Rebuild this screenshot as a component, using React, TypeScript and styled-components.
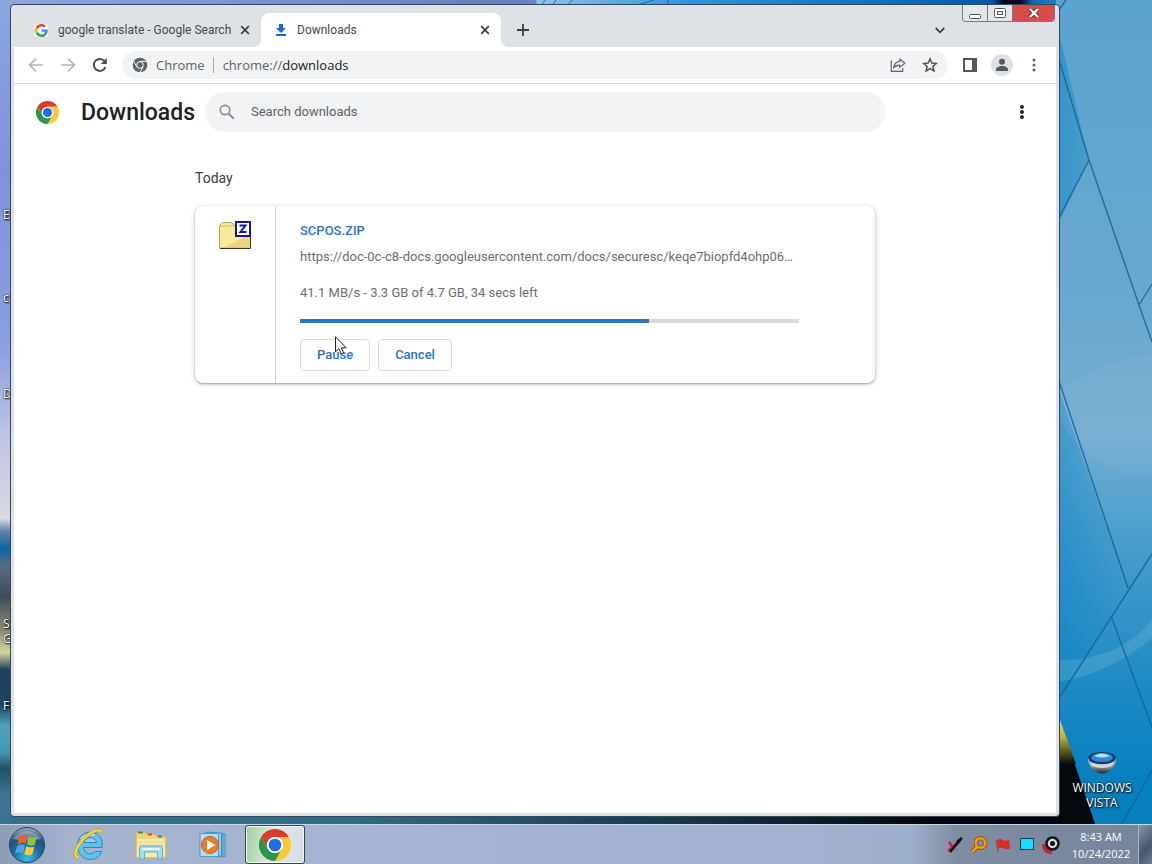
import React from "react";
import styled, { createGlobalStyle, css } from "styled-components";

const UI = `"Open Sans", "Noto Sans", sans-serif`;
const PAGE = `Roboto, "Liberation Sans", sans-serif`;

const GlobalStyle = createGlobalStyle`
  *, *::before, *::after { box-sizing: border-box; }
  body { margin: 0; font-family: ${PAGE}; }
  button, input { font: inherit; color: inherit; }
  svg { display: block; flex: none; }
`;

/* ---------- Desktop ---------- */

const Desktop = styled.div`
  position: relative;
  display: flex;
  flex-direction: column;
  min-height: 100vh;
  overflow: hidden;
  background: #1b3a50;
`;

const WallpaperSvg = styled.svg`
  position: absolute;
  inset: 0;
  width: 100%;
  height: 100%;
`;

const Shortcut = styled.a<{ $top?: number; $bottom?: number; $side: "left" | "right" }>`
  position: absolute;
  ${(p) => (p.$top !== undefined ? `top: ${p.$top}px;` : `bottom: ${p.$bottom}px;`)}
  ${(p) => (p.$side === "left" ? "left: 3px; width: 20px;" : "right: 8px; width: 84px; align-items: center;")}
  display: flex;
  flex-direction: column;
  gap: 4px;
  overflow: hidden;
  color: #fff;
  font: 12px/15px ${UI};
  text-align: ${(p) => (p.$side === "left" ? "left" : "center")};
  text-decoration: none;
  text-shadow: 1px 1px 2px #000, 0 0 2px #000;
`;

/* ---------- Window ---------- */

const Window = styled.main`
  position: relative;
  flex: 1;
  display: flex;
  flex-direction: column;
  margin: 4px 92px 7px 10px;
  padding: 0 3px 3px 3px;
  border: 1px solid #34485c;
  border-radius: 4px;
  background: #dee1e6;
  overflow: hidden;
`;

const TabStrip = styled.header`
  display: flex;
  height: 42px;
  padding-left: 7px;
`;

const Tab = styled.div<{ $active?: boolean }>`
  position: relative;
  display: flex;
  align-items: center;
  flex: 0 1 240px;
  height: 34px;
  margin-top: 8px;
  padding: 0 11px 0 14px;
  color: #45494d;
  font: 12px/16px ${PAGE};
  ${(p) =>
    p.$active &&
    css`
      background: #fff;
      border-radius: 8px 8px 0 0;
      &::before,
      &::after {
        content: "";
        position: absolute;
        bottom: 0;
        width: 8px;
        height: 8px;
      }
      &::before {
        left: -8px;
        background: radial-gradient(circle at 0 0, transparent 8px, #fff 8px);
      }
      &::after {
        right: -8px;
        background: radial-gradient(circle at 100% 0, transparent 8px, #fff 8px);
      }
    `}
`;

const TabLink = styled.a`
  display: flex;
  align-items: center;
  gap: 10px;
  flex: 1;
  min-width: 0;
  color: inherit;
  text-decoration: none;
  white-space: nowrap;
`;

const IconButton = styled.button<{ $size?: number }>`
  display: flex;
  align-items: center;
  justify-content: center;
  flex: none;
  width: ${(p) => p.$size ?? 32}px;
  height: ${(p) => p.$size ?? 32}px;
  padding: 0;
  border: 0;
  border-radius: 50%;
  background: none;
  color: #5f6368;
`;

const StripButtons = styled.div<{ $end?: boolean }>`
  display: flex;
  align-items: center;
  padding-top: 8px;
  ${(p) => (p.$end ? "margin-left: auto; padding-right: 6px;" : "padding-left: 6px;")}
  button { color: #3c4043; }
`;

const Caption = styled.div`
  display: flex;
  align-self: flex-start;
  margin-right: 1px;
  border: 1px solid #777c82;
  border-top: 0;
  border-radius: 0 0 4px 4px;
  overflow: hidden;
`;

const CaptionButton = styled.button<{ $close?: boolean }>`
  display: flex;
  align-items: center;
  justify-content: center;
  width: ${(p) => (p.$close ? 41 : 25)}px;
  height: 16px;
  padding: 0;
  border: 0;
  border-right: ${(p) => (p.$close ? "0" : "1px solid #777c82")};
  background: ${(p) => (p.$close ? "#d94b4b" : "#e3e6ea")};
`;

const Toolbar = styled.nav`
  display: flex;
  align-items: center;
  height: 37px;
  padding: 0 6px;
  border-bottom: 1px solid #dadce0;
  background: #fff;
`;

const Omnibox = styled.div`
  display: flex;
  align-items: center;
  flex: 1;
  height: 28px;
  margin: 0 6px;
  padding: 0 2px 0 10px;
  border-radius: 14px;
  background: #f1f3f4;
  color: #5f6368;
  font: 13px/20px ${UI};
`;

const SiteName = styled.span`
  margin-left: 8px;
  padding-right: 8px;
  border-right: 1px solid #a5a9ad;
  line-height: 16px;
`;

const Scheme = styled.label`
  margin-left: 9px;
`;

const Address = styled.input`
  flex: 1;
  min-width: 0;
  padding: 0;
  border: 0;
  outline: 0;
  background: none;
  color: #202124;
`;

const Avatar = styled.span`
  display: flex;
  align-items: center;
  justify-content: center;
  width: 22px;
  height: 22px;
  border-radius: 50%;
  background: #dee1e6;
`;

/* ---------- Downloads page ---------- */

const Page = styled.section`
  flex: 1;
  background: #fff;
`;

const PageHeader = styled.div`
  display: flex;
  align-items: center;
  height: 56px;
  padding: 0 18px 0 22px;
`;

const Title = styled.h1`
  width: 112px;
  margin: 2px 12px 0 22px;
  color: #202124;
  font-size: 23px;
  font-weight: 500;
  line-height: 32px;
  white-space: nowrap;
`;

const Search = styled.label`
  display: flex;
  align-items: center;
  flex: 0 1 680px;
  gap: 14px;
  height: 40px;
  padding: 0 12px;
  border-radius: 20px;
  background: #f1f3f4;
`;

const SearchInput = styled.input`
  flex: 1;
  min-width: 0;
  padding: 0;
  border: 0;
  outline: 0;
  background: none;
  font-size: 13px;
  line-height: 20px;
  &::placeholder { color: #5f6368; opacity: 1; }
`;

const MenuSlot = styled.div`
  margin-left: auto;
  button { color: #202124; }
`;

const List = styled.div`
  max-width: 680px;
  margin: 0 auto;
  padding-top: 28px;
`;

const DateHeading = styled.h2`
  margin: 0 0 18px;
  color: #3c4043;
  font-size: 14px;
  font-weight: 400;
  line-height: 20px;
`;

const Card = styled.article`
  display: flex;
  border-radius: 8px;
  background: #fff;
  box-shadow: 0 1px 2px rgba(60, 64, 67, 0.4), 0 1px 4px 1px rgba(60, 64, 67, 0.16);
`;

const FileIconColumn = styled.div`
  width: 81px;
  padding: 14px 24px;
  border-right: 1px solid #d0d3d7;
`;

const Details = styled.div`
  flex: 1;
  min-width: 0;
  padding: 16px 76px 12px 24px;
  color: #6a6e73;
  font-size: 13px;
  line-height: 18px;
`;

const FileName = styled.a`
  display: block;
  color: #2b71d0;
  font-weight: 500;
  text-decoration: none;
`;

const Line = styled.p<{ $gap: number }>`
  margin: ${(p) => p.$gap}px 0 0;
  white-space: nowrap;
`;

const Progress = styled.progress`
  appearance: none;
  display: block;
  width: 100%;
  height: 4px;
  margin: 17px 0 16px;
  border: 0;
  background: #dadada;
  &::-webkit-progress-bar { background: #dadada; }
  &::-webkit-progress-value { background: #2f76bd; }
  &::-moz-progress-bar { background: #2f76bd; }
`;

const Actions = styled.div`
  display: flex;
  gap: 8px;
`;

const ActionButton = styled.button`
  height: 32px;
  padding: 0 16px;
  border: 1px solid #dadce0;
  border-radius: 4px;
  background: #fff;
  color: #2b71d0;
  font-weight: 500;
`;

const Pointer = styled.svg`
  position: absolute;
  left: 335px;
  top: 336px;
`;

/* ---------- Taskbar ---------- */

const Taskbar = styled.footer`
  position: relative;
  display: flex;
  align-items: center;
  height: 40px;
  border-top: 1px solid #c8d6e6;
  background: linear-gradient(90deg, #8c9db8 0, #a5b3cd 70px, #a4b4d2 320px, #a2b2d0 70%, #9fb0ca 79%, #7f8da4 83%, #76859c 100%);
`;

const StartButton = styled.button`
  display: flex;
  justify-content: center;
  width: 54px;
  margin-right: 5px;
  padding: 0;
  border: 0;
  background: none;
`;

const TaskButton = styled.button<{ $active?: boolean }>`
  display: flex;
  align-items: center;
  justify-content: center;
  width: 60px;
  height: 39px;
  margin-right: 2px;
  padding: 0;
  border: ${(p) => (p.$active ? "1px solid #37424f" : "0")};
  border-radius: 3px;
  background: ${(p) => (p.$active ? "linear-gradient(100deg, #9fd09a, #dfe9e4 45%, #d5dce8)" : "none")};
  box-shadow: ${(p) => (p.$active ? "inset 0 0 0 1px #f4f8fa" : "none")};
`;

const Tray = styled.div`
  display: flex;
  align-items: center;
  gap: 4px;
  height: 100%;
  margin-left: auto;
`;

const TrayButton = styled.button`
  display: flex;
  align-items: center;
  justify-content: center;
  width: 20px;
  height: 24px;
  padding: 0;
  border: 0;
  background: none;
`;

const Clock = styled.time`
  width: 66px;
  margin-left: 3px;
  color: #fff;
  font: 11px/17px ${UI};
  text-align: center;
`;

const ShowDesktop = styled.button`
  width: 14px;
  height: 100%;
  padding: 0;
  border: 1px solid #a9b7c8;
  border-width: 0 0 0 1px;
  background: linear-gradient(135deg, #8595ab, #46566d 60%, #6b7b91);
`;

/* ---------- Drawings ---------- */

const Wallpaper = () => (
  <WallpaperSvg viewBox="0 0 1152 864" preserveAspectRatio="none" aria-hidden="true">
    <defs>
      <linearGradient id="sky" x1="0" y1="0" x2="0" y2="1">
        <stop offset="0" stopColor="#8aa7df" />
        <stop offset=".2" stopColor="#7d93db" />
        <stop offset=".4" stopColor="#8c9ee0" />
        <stop offset=".5" stopColor="#bcc2e2" />
        <stop offset=".6" stopColor="#dcd9e2" />
        <stop offset=".615" stopColor="#5c83ac" />
        <stop offset=".635" stopColor="#0f64a5" />
        <stop offset=".655" stopColor="#5a6c84" />
        <stop offset=".69" stopColor="#404a58" />
        <stop offset=".73" stopColor="#8e8d70" />
        <stop offset=".755" stopColor="#d5d6a0" />
        <stop offset=".775" stopColor="#20415a" />
        <stop offset=".815" stopColor="#1c4560" />
        <stop offset=".84" stopColor="#4ea3b8" />
        <stop offset=".87" stopColor="#4796b0" />
        <stop offset=".89" stopColor="#215068" />
        <stop offset=".92" stopColor="#3b7694" />
        <stop offset="1" stopColor="#37708f" />
      </linearGradient>
      <linearGradient id="glass" x1="0" y1="0" x2="0" y2="1">
        <stop offset="0" stopColor="#5ba4cf" />
        <stop offset=".3" stopColor="#66a7ce" />
        <stop offset=".5" stopColor="#74aed2" />
        <stop offset=".62" stopColor="#4a9ecd" />
        <stop offset=".8" stopColor="#1c89c4" />
        <stop offset=".9" stopColor="#0780c0" />
        <stop offset="1" stopColor="#0a7cba" />
      </linearGradient>
      <linearGradient id="glassLeft" x1="0" y1="0" x2="1" y2="0">
        <stop offset="0" stopColor="#0a82c4" stopOpacity=".5" />
        <stop offset="1" stopColor="#0a82c4" stopOpacity="0" />
      </linearGradient>
      <linearGradient id="topEdge" x1="0" y1="0" x2="1" y2="0">
        <stop offset="0" stopColor="#8aa7df" />
        <stop offset=".44" stopColor="#6a7cc4" />
        <stop offset=".46" stopColor="#6a86c6" />
        <stop offset=".462" stopColor="#8fc2e6" />
        <stop offset=".6" stopColor="#2d94da" />
        <stop offset=".78" stopColor="#0b6cc0" />
        <stop offset=".86" stopColor="#0a55aa" />
        <stop offset=".87" stopColor="#02061c" />
        <stop offset=".885" stopColor="#02061c" />
        <stop offset=".895" stopColor="#0f66b4" />
        <stop offset=".95" stopColor="#4aa2d2" />
        <stop offset="1" stopColor="#5ba4cf" />
      </linearGradient>
      <linearGradient id="bottomEdge" x1="0" y1="0" x2="1" y2="0">
        <stop offset="0" stopColor="#37708f" />
        <stop offset=".3" stopColor="#336a88" />
        <stop offset=".6" stopColor="#173546" />
        <stop offset=".8" stopColor="#04080c" />
        <stop offset="1" stopColor="#04080c" />
      </linearGradient>
      <linearGradient id="glow" x1="0" y1="0" x2="0" y2="1">
        <stop offset="0" stopColor="#ece9c0" />
        <stop offset=".5" stopColor="#c2b53a" />
        <stop offset="1" stopColor="#070b0c" />
      </linearGradient>
    </defs>
    <rect width="560" height="864" fill="url(#sky)" />
    <rect x="10" width="1142" height="10" fill="url(#topEdge)" />
    <rect x="10" y="810" width="1142" height="54" fill="url(#bottomEdge)" />
    <path d="M1056 0h96v864h-44l-52-155z" fill="url(#glass)" />
    <path d="M1056 20l33 140-29 60z M1056 382l72 206-68 109z" fill="url(#glassLeft)" />
    <path d="M1056 395q40-35 96-40v120q-50 10-96-60z" fill="#9dbfda" opacity=".14" />
    <path d="M1060 660q60 0 92-40v18q-40 34-92 44z" fill="#9fd0e2" opacity=".2" />
    <path d="M1056 709l39 115h-39z" fill="#05090b" />
    <path d="M1056 709l20 55h-20z" fill="url(#glow)" />
    <g fill="none" stroke="#10639b" strokeWidth="1.4" opacity=".85">
      <path d="M1058 56l31 104 50 145 13 37M1089 160l-30 58M1139 305l13-21M1058 378l70 210M1058 700l94-146M1111 616l41 111M1122 824l30-54M1066 0l-7 10" />
      <path d="M545 0l-4 6M556 0l-4 6M572 0l-5 6M634 6l20-6M668 0v6" strokeWidth="1" />
    </g>
  </WallpaperSvg>
);

const ChromeLogo = ({ size }: { size: number }) => (
  <svg width={size} height={size} viewBox="0 0 48 48" aria-hidden="true">
    <path d="M24 12H44.8A24 24 0 0 0 3.2 12L13.6 30A12 12 0 0 1 24 12z" fill="#db3a2f" />
    <path d="M34.4 30L24 48A24 24 0 0 0 44.8 12H24A12 12 0 0 1 34.4 30z" fill="#fcc934" />
    <path d="M13.6 30L3.2 12A24 24 0 0 0 24 48L34.4 30A12 12 0 0 1 13.6 30z" fill="#2b9548" />
    <circle cx="24" cy="24" r="12" fill="#fff" />
    <circle cx="24" cy="24" r="9.5" fill="#1f6fe0" />
  </svg>
);

const ChromeMono = () => (
  <svg width="16" height="16" viewBox="0 0 48 48" aria-hidden="true">
    <circle cx="24" cy="24" r="22" fill="#5f6368" />
    <path d="M24 13H46M14.5 29.5L3.5 10.4M33.5 29.5L23 48" stroke="#f1f3f4" strokeWidth="3" />
    <circle cx="24" cy="24" r="11" fill="#f1f3f4" />
    <circle cx="24" cy="24" r="8" fill="#5f6368" />
  </svg>
);

const GoogleG = () => (
  <svg width="13" height="13" viewBox="0 0 48 48" aria-hidden="true">
    <circle cx="24" cy="24" r="30" fill="#fff" />
    <path fill="#EA4335" d="M24 9.5c3.54 0 6.71 1.22 9.21 3.6l6.85-6.85C35.9 2.38 30.47 0 24 0 14.62 0 6.51 5.38 2.56 13.22l7.98 6.19C12.43 13.72 17.74 9.5 24 9.5z" />
    <path fill="#4285F4" d="M46.98 24.55c0-1.57-.15-3.09-.38-4.55H24v9.02h12.94c-.58 2.96-2.26 5.48-4.78 7.18l7.73 6c4.51-4.18 7.09-10.36 7.09-17.65z" />
    <path fill="#FBBC05" d="M10.53 28.59a14.5 14.5 0 0 1 0-9.18l-7.98-6.19a24 24 0 0 0 0 21.56l7.98-6.19z" />
    <path fill="#34A853" d="M24 48c6.48 0 11.93-2.13 15.89-5.81l-7.73-6c-2.15 1.45-4.92 2.3-8.16 2.3-6.26 0-11.57-4.22-13.47-9.91l-7.98 6.19C6.51 42.62 14.62 48 24 48z" />
  </svg>
);

const DownloadGlyph = () => (
  <svg width="12" height="14" viewBox="0 0 12 14" aria-hidden="true">
    <path d="M4 1h4v4h3L6 10 1 5h3zM1 11h10v2H1z" fill="#1f66d0" />
  </svg>
);

const CloseGlyph = () => (
  <svg width="10" height="10" viewBox="0 0 10 10" aria-hidden="true">
    <path d="M1.2 1.2l7.6 7.6M8.8 1.2L1.2 8.8" stroke="#3c4043" strokeWidth="1.7" />
  </svg>
);

const Arrow = ({ forward }: { forward?: boolean }) => (
  <svg width="16" height="16" viewBox="0 0 16 16" fill="none" stroke="#b3b6b9" strokeWidth="1.7" aria-hidden="true">
    <path d={forward ? "M1 8h13M8 1.5L14.3 8 8 14.5" : "M15 8H2M8 1.5L1.7 8 8 14.5"} />
  </svg>
);

const Reload = () => (
  <svg width="16" height="16" viewBox="0 0 16 16" aria-hidden="true">
    <path d="M13.4 10.2A6 6 0 1 1 12.6 4.2" fill="none" stroke="#4a4e52" strokeWidth="2" />
    <path d="M14.8 1v6H8.8z" fill="#4a4e52" />
  </svg>
);

const Share = () => (
  <svg width="16" height="16" viewBox="0 0 16 16" fill="none" stroke="#5f6368" strokeWidth="1.2" aria-hidden="true">
    <path d="M1.2 3.5v10.8h11.5v-3.2" />
    <path d="M9.8 2l5 4.2-5 4.2V8.1C7 8 5 9 3.6 11 4 7 6 4.6 9.8 4.3z" strokeLinejoin="round" />
  </svg>
);

const Star = () => (
  <svg width="16" height="16" viewBox="0 0 24 24" fill="none" stroke="#4f5357" strokeWidth="2.2" aria-hidden="true">
    <path d="M12 2.8l2.7 6.3 6.8.6-5.2 4.5 1.6 6.7-5.9-3.6-5.9 3.6 1.6-6.7-5.2-4.5 6.8-.6z" />
  </svg>
);

const SidePanel = () => (
  <svg width="14" height="14" viewBox="0 0 14 14" aria-hidden="true">
    <path d="M0 0h14v14H0zM2 2v10h7V2z" fill="#55595e" fillRule="evenodd" />
  </svg>
);

const Person = () => (
  <svg width="14" height="14" viewBox="0 0 14 14" fill="#55595e" aria-hidden="true">
    <circle cx="7" cy="3.8" r="3" />
    <path d="M1 13v-1.5C1 9.300 4 8 7 8s6 1.300 6 3.500V13z" />
  </svg>
);

const Dots = ({ r }: { r: number }) => (
  <svg width="6" height="16" viewBox="0 0 6 16" fill="currentColor" aria-hidden="true">
    <circle cx="3" cy="3" r={r} />
    <circle cx="3" cy="8" r={r} />
    <circle cx="3" cy="13" r={r} />
  </svg>
);

const Magnifier = () => (
  <svg width="20" height="20" viewBox="0 0 20 20" fill="none" stroke="#8d9195" aria-hidden="true">
    <circle cx="8" cy="8" r="4.7" strokeWidth="1.7" />
    <path d="M11.5 11.5l5.3 5.3" strokeWidth="2" />
  </svg>
);

const ZipFolder = () => (
  <svg width="32" height="32" viewBox="0 0 32 32" aria-hidden="true">
    <path d="M.5 28V5.500l3-3h9l3 3h16V28z" fill="#f6eb96" stroke="#b3a552" />
    <path d="M32 14v14H4z" fill="#e6c577" opacity=".6" />
    <path d="M1 28.500h30.500V8" fill="none" stroke="#3c3520" />
    <path d="M1 6h15" stroke="#cbbd62" />
    <path d="M17 2h14v14H17z" fill="#fff" stroke="#1414a8" strokeWidth="2" />
    <path d="M20.500 5.500h6l-5 6.500h6" fill="none" stroke="#1414a8" strokeWidth="2" />
  </svg>
);

const StartOrb = () => (
  <svg width="36" height="36" viewBox="0 0 36 36" aria-hidden="true">
    <defs>
      <radialGradient id="orb" cx=".5" cy=".9" r=".9">
        <stop offset="0" stopColor="#35c0ec" />
        <stop offset=".45" stopColor="#1c6a9c" />
        <stop offset=".75" stopColor="#2c4f74" />
        <stop offset="1" stopColor="#9fb6c8" />
      </radialGradient>
    </defs>
    <circle cx="18" cy="18" r="17.5" fill="url(#orb)" stroke="#23415c" />
    <path d="M4 12Q18-4 32 12 18 15 4 12z" fill="#d6e2ea" opacity=".4" />
    <path d="M10.500 9.500q4-3 8-.5l-2 8q-4-2.500-8 .5z" fill="#e9602a" />
    <path d="M19.800 9.800q3.500 2 8 0l-2 8q-4 2-8-.2z" fill="#8cc63e" />
    <path d="M8 19q4-3 8-.6l-2 8q-4-2.400-8 .4z" fill="#4aa5e8" />
    <path d="M17.300 19.200q4 2.200 8 .2l-2 8q-4 2-8-.3z" fill="#fbc935" />
  </svg>
);

const Explorer = () => (
  <svg width="32" height="30" viewBox="0 0 32 30" aria-hidden="true">
    <path d="M1 2h9l1 2h9l1 2h10v22H1z" fill="#ecd57e" stroke="#cdb25a" />
    <path d="M3 2.500h5" stroke="#3d9b3e" strokeWidth="2" />
    <path d="M13 4.500h4" stroke="#d9482b" strokeWidth="2" />
    <path d="M23 6.500h4" stroke="#3c7cc4" strokeWidth="2" />
    <path d="M2 9h28v18H2z" fill="#f7eaa5" />
    <path d="M2 12h28M2 15h28" stroke="#e8d68a" />
    <path d="M4.500 29V18q0-2 2-2h19q2 0 2 2v11h-5v-7h-13v7z" fill="#a6dcf0" stroke="#5bb0d4" />
    <path d="M7 19h18" stroke="#e4f6fb" strokeWidth="2" />
  </svg>
);

const InternetExplorer = () => (
  <svg width="32" height="34" viewBox="0 0 32 34" fill="none" aria-hidden="true">
    <path d="M10.500 19.500H29C30.500 10 25 4 17.500 4 10 4 4.500 10 4.500 18c0 8 5.500 13.500 13 13.500 5.500 0 9.500-3 11-8h-6.500c-2.500 4-11 3-11.500-4z" fill="#5cc3ee" stroke="#2688be" />
    <path d="M11 14.500C12.500 8 22.500 8 23.500 14.500z" fill="#b2c3de" stroke="#2688be" />
    <path d="M8 11Q13 5 21 7" stroke="#c9effc" strokeWidth="2" />
    <path d="M5.500 29.500C-.5 29 3 18 12 9.500 20 2 28 .500 28.500 4.500" stroke="#c49a1a" strokeWidth="3.600" />
    <path d="M5.500 29.500C-.5 29 3 18 12 9.500 20 2 28 .500 28.500 4.500" stroke="#f4d548" strokeWidth="2.400" />
  </svg>
);

const MediaPlayer = () => (
  <svg width="28" height="28" viewBox="0 0 28 28" aria-hidden="true">
    <path d="M8 1l18 2v23l-18-1z" fill="#8cc4e4" stroke="#3b8ebf" />
    <path d="M5 2h17.500v23H5zM24 3v22" fill="#9ccbe6" stroke="#3b8ebf" />
    <path d="M1 2.500h18.500v23H1z" fill="#b6dcf0" stroke="#4b9ac6" />
    <circle cx="11" cy="14" r="8.5" fill="#ee7a2c" stroke="#cc5b18" />
    <path d="M8 9l8.500 5L8 19z" fill="#fff" />
  </svg>
);

const Bowl = () => (
  <svg width="30" height="26" viewBox="0 0 30 26" aria-hidden="true">
    <defs>
      <linearGradient id="bowl" x1="0" y1="0" x2="0" y2="1">
        <stop offset="0" stopColor="#dcdcdc" />
        <stop offset=".6" stopColor="#8b8d8f" />
        <stop offset="1" stopColor="#1f2224" />
      </linearGradient>
    </defs>
    <path d="M1 8q0 8 7 13 7 5 14 0 7-5 7-13z" fill="url(#bowl)" />
    <path d="M1 8Q2 2 15 2T29 8Q28 14 15 14T1 8z" fill="#1a3c5e" />
    <path d="M4 8Q5 3 15 3T26 8Q24 12 15 12T4 8z" fill="#2a86e0" />
    <path d="M7 6q8-5 16 0-8 3-16 0z" fill="#bfe2fa" />
    <path d="M3 12q12 5 24 0l-2 4q-10 4-20 0z" fill="#e6e6e6" opacity=".8" />
  </svg>
);

const trayItems: { label: string; icon: React.ReactNode }[] = [
  {
    label: "Security",
    icon: (
      <svg width="16" height="18" viewBox="0 0 16 18" fill="none">
        <path d="M2 6l5 7M1.500 15L12 5" stroke="#c01f3c" strokeWidth="2.5" />
        <path d="M3 16L14.500 2.500M10 6l5-4" stroke="#111" strokeWidth="2.5" />
      </svg>
    ),
  },
  {
    label: "Search tool",
    icon: (
      <svg width="18" height="18" viewBox="0 0 18 18" fill="none">
        <path d="M7 11l-5 5" stroke="#9a5208" strokeWidth="4.5" />
        <circle cx="10.5" cy="7" r="4.8" stroke="#9a5208" strokeWidth="4.2" />
        <path d="M7 11l-5 5" stroke="#f49a1c" strokeWidth="2.5" />
        <circle cx="10.5" cy="7" r="4.8" stroke="#f49a1c" strokeWidth="2.5" />
      </svg>
    ),
  },
  {
    label: "Flag",
    icon: (
      <svg width="16" height="16" viewBox="0 0 16 16">
        <path d="M1 3l2 12" stroke="#8b5a54" strokeWidth="1.5" />
        <path d="M2 3q4-2 6 0t6-.5l1 9q-3 1.500-6 0t-6 .500z" fill="#d92c24" />
      </svg>
    ),
  },
  {
    label: "Display",
    icon: (
      <svg width="16" height="16" viewBox="0 0 16 16">
        <path d="M1.500 1.500h13v11h-13z" fill="#15e0fb" stroke="#135" />
      </svg>
    ),
  },
  {
    label: "Volume",
    icon: (
      <svg width="18" height="18" viewBox="0 0 18 18" fill="none">
        <path d="M2 8q0 8 8 8" stroke="#c3243a" strokeWidth="4" />
        <circle cx="10.5" cy="7.5" r="6" fill="#ddd" stroke="#151515" strokeWidth="2.5" />
        <circle cx="10.5" cy="7.5" r="2.5" fill="#111" />
      </svg>
    ),
  },
];

const leftShortcuts = [
  { top: 207, text: "E..." },
  { top: 290, text: "cm" },
  { top: 386, text: "Do" },
  { top: 616, text: "SI G" },
  { top: 698, text: "Fil" },
];

/* ---------- App ---------- */

export default function App() {
  return (
    <Desktop>
      <GlobalStyle />
      <Wallpaper />
      {leftShortcuts.map((s) => (
        <Shortcut key={s.top} href="#" $side="left" $top={s.top}>
          {s.text}
        </Shortcut>
      ))}
      <Shortcut href="#" $side="right" $bottom={54}>
        <Bowl />
        <span>WINDOWS VISTA</span>
      </Shortcut>

      <Window>
        <TabStrip>
          <Tab>
            <TabLink href="#">
              <GoogleG />
              google translate - Google Search
            </TabLink>
            <IconButton $size={10} aria-label="Close tab">
              <CloseGlyph />
            </IconButton>
          </Tab>
          <Tab $active>
            <TabLink href="#">
              <DownloadGlyph />
              Downloads
            </TabLink>
            <IconButton $size={10} aria-label="Close tab">
              <CloseGlyph />
            </IconButton>
          </Tab>
          <StripButtons>
            <IconButton aria-label="New tab">
              <svg width="12" height="12" viewBox="0 0 12 12" aria-hidden="true">
                <path d="M6 0v12M0 6h12" stroke="currentColor" strokeWidth="1.8" />
              </svg>
            </IconButton>
          </StripButtons>
          <StripButtons $end>
            <IconButton aria-label="Search tabs">
              <svg width="10" height="7" viewBox="0 0 10 7" fill="none" aria-hidden="true">
                <path d="M.7 1L5 5.300 9.300 1" stroke="currentColor" strokeWidth="1.8" />
              </svg>
            </IconButton>
          </StripButtons>
          <Caption>
            <CaptionButton aria-label="Minimize">
              <svg width="12" height="12" viewBox="0 0 12 12">
                <rect x=".5" y="7.5" width="11" height="4" rx="1" fill="#fff" stroke="#555" />
              </svg>
            </CaptionButton>
            <CaptionButton aria-label="Maximize">
              <svg width="12" height="10" viewBox="0 0 12 10" fill="#fff" stroke="#555">
                <rect x=".5" y=".5" width="11" height="9" rx="1" />
                <rect x="3.5" y="3.5" width="5" height="3" />
              </svg>
            </CaptionButton>
            <CaptionButton $close aria-label="Close">
              <svg width="12" height="10" viewBox="0 0 12 10" fill="none">
                <path d="M2 1l8 8M10 1L2 9" stroke="#5c3036" strokeWidth="4" />
                <path d="M2 1l8 8M10 1L2 9" stroke="#fff" strokeWidth="2.4" />
              </svg>
            </CaptionButton>
          </Caption>
        </TabStrip>

        <Toolbar aria-label="Browser toolbar">
          <IconButton aria-label="Back">
            <Arrow />
          </IconButton>
          <IconButton aria-label="Forward">
            <Arrow forward />
          </IconButton>
          <IconButton aria-label="Reload">
            <Reload />
          </IconButton>
          <Omnibox>
            <ChromeMono />
            <SiteName>Chrome</SiteName>
            <Scheme htmlFor="address">chrome://</Scheme>
            <Address id="address" defaultValue="downloads" spellCheck={false} />
            <IconButton aria-label="Share">
              <Share />
            </IconButton>
            <IconButton aria-label="Bookmark this page">
              <Star />
            </IconButton>
          </Omnibox>
          <IconButton aria-label="Side panel">
            <SidePanel />
          </IconButton>
          <IconButton aria-label="Profile">
            <Avatar>
              <Person />
            </Avatar>
          </IconButton>
          <IconButton aria-label="Browser menu">
            <Dots r={1.5} />
          </IconButton>
        </Toolbar>

        <Page>
          <PageHeader>
            <ChromeLogo size={23} />
            <Title>Downloads</Title>
            <Search>
              <Magnifier />
              <SearchInput type="search" placeholder="Search downloads" aria-label="Search downloads" />
            </Search>
            <MenuSlot>
              <IconButton aria-label="More actions">
                <Dots r={2} />
              </IconButton>
            </MenuSlot>
          </PageHeader>

          <List>
            <DateHeading>Today</DateHeading>
            <Card>
              <FileIconColumn>
                <ZipFolder />
              </FileIconColumn>
              <Details>
                <FileName href="#">SCPOS.ZIP</FileName>
                <Line $gap={8}>https://doc-0c-c8-docs.googleusercontent.com/docs/securesc/keqe7biopfd4ohp06…</Line>
                <Line $gap={18}>41.1 MB/s - 3.3 GB of 4.7 GB, 34 secs left</Line>
                <Progress value={70} max={100} aria-label="Download progress" />
                <Actions>
                  <ActionButton>Pause</ActionButton>
                  <ActionButton>Cancel</ActionButton>
                </Actions>
              </Details>
            </Card>
          </List>
        </Page>
      </Window>

      <Taskbar>
        <StartButton aria-label="Start">
          <StartOrb />
        </StartButton>
        <TaskButton aria-label="Internet Explorer">
          <InternetExplorer />
        </TaskButton>
        <TaskButton aria-label="Windows Explorer">
          <Explorer />
        </TaskButton>
        <TaskButton aria-label="Media Player">
          <MediaPlayer />
        </TaskButton>
        <TaskButton $active aria-label="Google Chrome">
          <ChromeLogo size={32} />
        </TaskButton>
        <Tray>
          {trayItems.map((t) => (
            <TrayButton key={t.label} aria-label={t.label}>
              {t.icon}
            </TrayButton>
          ))}
          <Clock>
            8:43 AM
            <br />
            10/24/2022
          </Clock>
          <ShowDesktop aria-label="Show desktop" />
        </Tray>
      </Taskbar>

      <Pointer width="12" height="19" viewBox="0 0 12 19" aria-hidden="true">
        <path d="M.5.8v15l3.400-3.200 2.500 5.600 2.300-1-2.400-5.400h4.900z" fill="#fff" stroke="#222" />
      </Pointer>
    </Desktop>
  );
}
